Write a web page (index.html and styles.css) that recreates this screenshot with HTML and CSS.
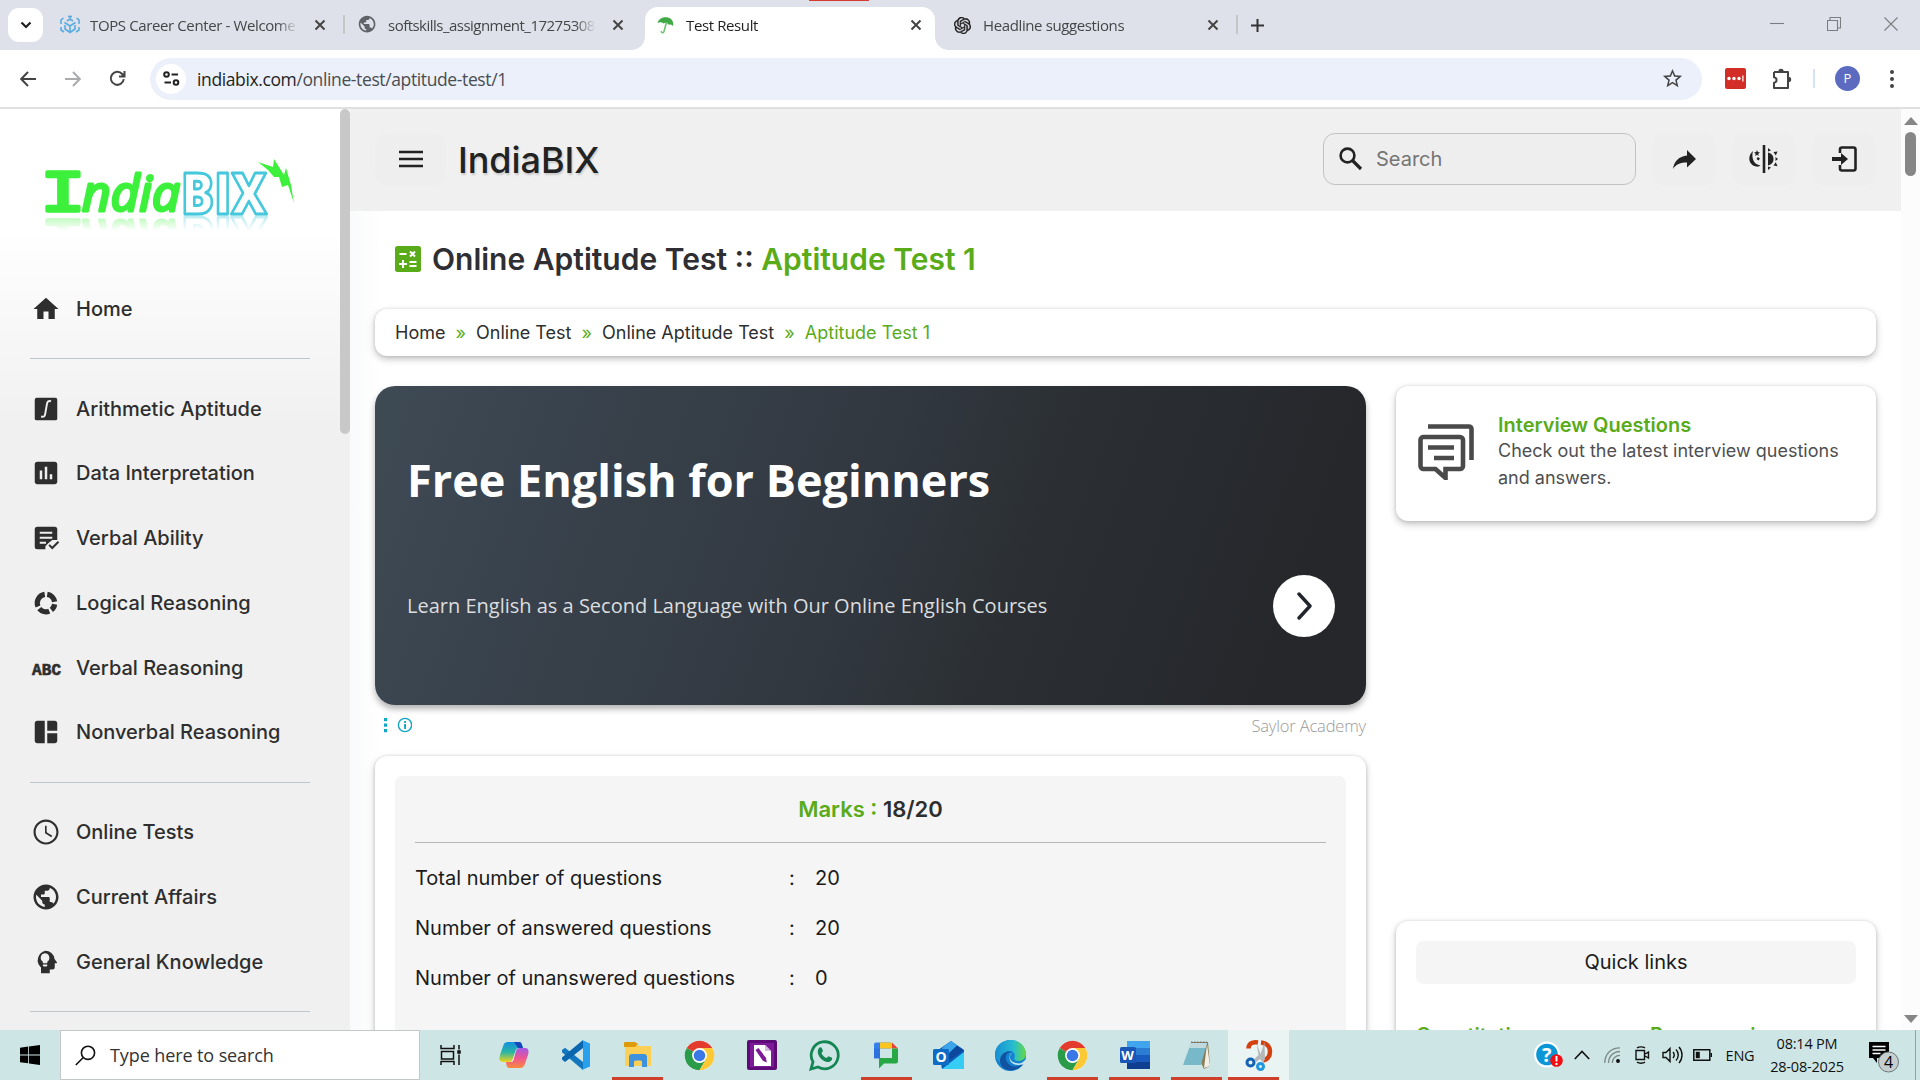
FILE: index.html
```html
<!DOCTYPE html>
<html lang="en">
<head>
<meta charset="utf-8">
<title>Test Result</title>
<link rel="stylesheet" href="styles.css">
</head>
<body>
<svg class="defs" width="0" height="0">
  <symbol id="close" viewBox="0 0 12 12"><path d="M1.5 1.5l9 9M10.5 1.5l-9 9" stroke="currentColor" stroke-width="2" fill="none"/></symbol>
  <symbol id="globe" viewBox="0 0 24 24"><path d="M12 2C6.48 2 2 6.48 2 12s4.480 10 10 10 10-4.480 10-10S17.520 2 12 2zm-1 17.930c-3.950-.49-7-3.850-7-7.930 0-.62.08-1.210.21-1.790L9 15v1c0 1.100.9 2 2 2v1.930zm6.900-2.540c-.26-.81-1-1.390-1.900-1.390h-1v-3c0-.55-.45-1-1-1H8v-2h2c.55 0 1-.45 1-1V7h2c1.100 0 2-.9 2-2v-.41c2.930 1.190 5 4.060 5 7.410 0 2.080-.8 3.970-2.100 5.390z"/></symbol>
  <symbol id="chrome" viewBox="0 0 48 48">
    <circle cx="24" cy="24" r="23" fill="#fff"/>
    <path d="M24 24L4.100 12.500A23 23 0 0 1 43.900 12.500H24z" fill="#e33b2e"/>
    <path d="M24 24L4.100 12.500A23 23 0 0 0 24 47L34 29.800z" fill="#2a9b48"/>
    <path d="M24 12.500H43.900A23 23 0 0 1 24 47L34 29.800z" fill="#fcc934"/>
    <circle cx="24" cy="24" r="11.500" fill="#fff"/><circle cx="24" cy="24" r="9" fill="#3b78e7"/>
  </symbol>
</svg>

<div class="tabstrip">
  <button class="tab-search"><svg width="12" height="8" viewBox="0 0 12 8"><path d="M1.500 1.500L6 6l4.500-4.500" fill="none" stroke="#1f1f1f" stroke-width="2.200"/></svg></button>
  <div class="tab">
    <svg class="favicon" viewBox="0 0 20 20" fill="none" stroke="#5aabe0" stroke-width="1.600"><path d="M10 18v-7L4.500 7.500M10 11l5.500-3.500M7 6l3-2 3 2M10 4V0.500M3.500 3L1 5v4M16.500 3L19 5v4M5 10v4l5 3.500 5-3.500v-4M1 12v3l3 2M19 12v3l-3 2M8 1.500h4"/></svg>
    <span class="tab-title">TOPS Career Center - Welcome</span>
    <svg class="tab-close"><use href="#close"/></svg>
  </div>
  <div class="tab divided">
    <svg class="favicon" viewBox="1 1 22 22" fill="#5f6368"><use href="#globe"/></svg>
    <span class="tab-title long">softskills_assignment_17275308</span>
    <svg class="tab-close"><use href="#close"/></svg>
  </div>
  <div class="tab active">
    <svg class="favicon" viewBox="0 0 20 20"><path d="M1.500 8C3 2 11 .5 15 4c2 1.800 2.500 4 2 7-1.200-1.500-2.800-2-4.300-1.200C11.500 8 9.500 7 7.500 8.500 5.500 6.700 3.500 7 1.500 8z" fill="#3fa945"/><path d="M10.500 7L8 16.500c-.7 2-3 1.500-2.600-.5" fill="none" stroke="#6fc172" stroke-width="1.600"/></svg>
    <span class="tab-title">Test Result</span>
    <svg class="tab-close"><use href="#close"/></svg>
  </div>
  <div class="tab">
    <svg class="favicon small" viewBox="0 0 24 24" fill="#1a1a1a" stroke="#1a1a1a" stroke-width=".5"><path d="M22.2819 9.8211a5.9847 5.9847 0 0 0-.5157-4.9108 6.0462 6.0462 0 0 0-6.5098-2.9A6.0651 6.0651 0 0 0 4.9807 4.1818a5.9847 5.9847 0 0 0-3.9977 2.9 6.0462 6.0462 0 0 0 .7427 7.0966 5.98 5.98 0 0 0 .511 4.9107 6.051 6.051 0 0 0 6.5146 2.9001A5.9847 5.9847 0 0 0 13.2599 24a6.0557 6.0557 0 0 0 5.7718-4.2058 5.9894 5.9894 0 0 0 3.9977-2.9001 6.0557 6.0557 0 0 0-.7475-7.0729zm-9.022 12.6081a4.4755 4.4755 0 0 1-2.8764-1.0408l.1419-.0804 4.7783-2.7582a.7948.7948 0 0 0 .3927-.6813v-6.7369l2.02 1.1686a.071.071 0 0 1 .038.052v5.5826a4.504 4.504 0 0 1-4.4945 4.4944zm-9.6607-4.1254a4.4708 4.4708 0 0 1-.5346-3.0137l.142.0852 4.783 2.7582a.7712.7712 0 0 0 .7806 0l5.8428-3.3685v2.3324a.0804.0804 0 0 1-.0332.0615L9.74 19.9502a4.4992 4.4992 0 0 1-6.1408-1.6464zM2.3408 7.8956a4.485 4.485 0 0 1 2.3655-1.9728V11.6a.7664.7664 0 0 0 .3879.6765l5.8144 3.3543-2.0201 1.1685a.0757.0757 0 0 1-.071 0l-4.8303-2.7865A4.504 4.504 0 0 1 2.3408 7.872zm16.5963 3.8558L13.1038 8.364 15.1192 7.2a.0757.0757 0 0 1 .071 0l4.8303 2.7913a4.4944 4.4944 0 0 1-.6765 8.1042v-5.6772a.79.79 0 0 0-.407-.667zm2.0107-3.0231l-.142-.0852-4.7735-2.7818a.7759.7759 0 0 0-.7854 0L9.409 9.2297V6.8974a.0662.0662 0 0 1 .0284-.0615l4.8303-2.7866a4.4992 4.4992 0 0 1 6.6802 4.66zM8.3065 12.863l-2.02-1.1638a.0804.0804 0 0 1-.038-.0567V6.0742a4.4992 4.4992 0 0 1 7.3757-3.4537l-.142.0805L8.704 5.459a.7948.7948 0 0 0-.3927.6813zm1.0976-2.3654l2.602-1.4998 2.6069 1.4998v2.9994l-2.5974 1.4997-2.6067-1.4997Z"/></svg>
    <span class="tab-title">Headline suggestions</span>
    <svg class="tab-close"><use href="#close"/></svg>
  </div>
  <div class="new-tab"><svg width="13" height="13" viewBox="0 0 13 13"><path d="M6.500 0v13M0 6.500h13" stroke="#333" stroke-width="2"/></svg></div>
  <div class="window-controls">
    <svg width="14" height="14" viewBox="0 0 14 14"><path d="M0 6.500h14"/></svg>
    <svg width="14" height="14" viewBox="0 0 14 14"><path d="M.5 3.500h10v10H.5zM3 3.500v-3h10.500v10.500H11"/></svg>
    <svg width="14" height="14" viewBox="0 0 14 14"><path d="M.5.5l13 13M13.500.5l-13 13"/></svg>
  </div>
  <i class="recording"></i>
</div>

<div class="toolbar">
  <div class="nav-slot"><svg width="16" height="16" viewBox="0 0 16 16" class="ln dark"><path d="M16 8H1.500M8 1L1.200 8 8 15"/></svg></div>
  <div class="nav-slot"><svg width="16" height="16" viewBox="0 0 16 16" class="ln pale"><path d="M0 8h14.500M8 1l6.800 7L8 15"/></svg></div>
  <div class="nav-slot"><svg width="17" height="17" viewBox="0 0 17 17" class="ln dark"><path d="M14.800 9.200A6.500 6.500 0 1 1 13.200 4L15 6M15.500 1v5.500H10"/></svg></div>
  <div class="omnibox">
    <span class="site-chip"><svg width="17" height="15" viewBox="0 0 17 15" fill="none" stroke="#222" stroke-width="2"><circle cx="3.500" cy="3.500" r="2.300"/><path d="M8.500 3.500H15M1.500 11.500H8"/><circle cx="13" cy="11.500" r="2.300"/></svg></span>
    <span class="url"><b>indiabix.com</b>/online-test/aptitude-test/1</span>
    <svg class="star" viewBox="0 0 24 24"><path fill="#444" d="M22 9.240l-7.190-.62L12 2 9.190 8.630 2 9.240l5.460 4.730L5.820 21 12 17.270 18.180 21l-1.630-7.030L22 9.240zM12 15.400l-3.760 2.270 1-4.280-3.320-2.880 4.380-.38L12 6.100l1.710 4.040 4.380.38-3.320 2.880 1 4.280L12 15.400z"/></svg>
  </div>
  <div class="ext"><svg width="21" height="21" viewBox="0 0 21 21"><rect width="21" height="21" rx="2" fill="#d32d27"/><g fill="#fff"><circle cx="4" cy="10.500" r="1.700"/><circle cx="9" cy="10.500" r="1.700"/><circle cx="14" cy="10.500" r="1.700"/><rect x="17.300" y="7.500" width="1.200" height="6"/></g></svg></div>
  <div class="ext puzzle"><svg width="22" height="22" viewBox="0 0 22 22"><path d="M3 4h14v5.500M17 13v7H3v-5.200c3.400-.6 3.400-5 0-5.600V4M17 9v5" fill="none" stroke="#444" stroke-width="2" stroke-linejoin="round"/><path d="M7.300 3.500a2.700 2.700 0 0 1 5.400 0zM17.500 8.800a2.700 2.700 0 0 1 0 5.400z" fill="#444"/></svg></div>
  <i class="tool-sep"></i>
  <span class="avatar">P</span>
  <svg class="dots" width="4" height="18" viewBox="0 0 4 18" fill="#444"><circle cx="2" cy="2" r="2"/><circle cx="2" cy="9" r="2"/><circle cx="2" cy="16" r="2"/></svg>
</div>

<div class="viewport">
  <aside class="sidebar">
    <div class="logo">
      <svg width="260" height="86" viewBox="0 -12 260 86">
        <text class="logo-serif" x="-4" y="52" textLength="46" lengthAdjust="spacingAndGlyphs">I</text>
        <text class="logo-script" x="38" y="52" textLength="98" lengthAdjust="spacingAndGlyphs">ndia</text>
        <text class="logo-bix" x="137" y="55" textLength="86" lengthAdjust="spacingAndGlyphs">BIX</text>
        <path d="M214 3l15 5 1-8 10 16 2-7 5 17 3 18-6-18-6 2-3-10-5 0-6-7z" fill="#3cf03c"/>
      </svg>
    </div>
    <nav>
      <a class="item"><svg viewBox="0 0 24 24"><path d="M10 20v-6h4v6h5v-8h3L12 3 2 12h3v8z"/></svg>Home</a>
      <hr>
      <a class="item"><svg viewBox="0 0 24 24"><rect x="3" y="3" width="18" height="18" rx="1.500"/><path d="M16 5.800c-2-.7-2.900.3-3.200 2l-1.500 8.400c-.3 1.700-1.200 2.400-3.200 1.800" fill="none" stroke="#f0f0f0" stroke-width="1.500"/></svg>Arithmetic Aptitude</a>
      <a class="item"><svg viewBox="0 0 24 24"><path d="M19 3H5c-1.100 0-2 .9-2 2v14c0 1.100.9 2 2 2h14c1.100 0 2-.9 2-2V5c0-1.100-.9-2-2-2zM9 17H7v-7h2v7zm4 0h-2V7h2v10zm4 0h-2v-4h2v4z"/></svg>Data Interpretation</a>
      <a class="item"><svg viewBox="0 0 24 24"><path d="M5 3h14a2 2 0 0 1 2 2v8.500h-4L14 16l-2.500 2.500V21H5a2 2 0 0 1-2-2V5a2 2 0 0 1 2-2z"/><path d="M7 7.700h10M7 11.700h10M7 15.700h5" stroke="#f0f0f0" stroke-width="1.600"/><path d="M14.500 17.500l2.500 2.500 5-5" fill="none" stroke="#2e2e2e" stroke-width="1.600"/></svg>Verbal Ability</a>
      <a class="item"><svg viewBox="0 0 24 24"><g fill="none" stroke="#2e2e2e" stroke-width="4.200"><path d="M13 5.100A7 7 0 0 1 18.900 11"/><path d="M18.900 13a7 7 0 0 1-2.600 4.500"/><path d="M14.600 18.500a7 7 0 0 1-8-2"/><path d="M5.600 14.800A7 7 0 0 1 11 5.100"/></g></svg>Logical Reasoning</a>
      <a class="item"><svg class="abc" viewBox="0 0 30 14"><text x="1" y="13.500" textLength="29">ABC</text></svg>Verbal Reasoning</a>
      <a class="item"><svg viewBox="0 0 24 24"><path d="M11 21H5c-1.100 0-2-.9-2-2V5c0-1.100.9-2 2-2h6v18zm2 0h6c1.100 0 2-.9 2-2v-6h-8v8zm8-10V5c0-1.100-.9-2-2-2h-6v8h8z"/></svg>Nonverbal Reasoning</a>
      <hr>
      <a class="item"><svg viewBox="0 0 24 24"><path d="M11.990 2C6.470 2 2 6.480 2 12s4.470 10 9.990 10C17.520 22 22 17.520 22 12S17.520 2 11.990 2zM12 20.300c-4.600 0-8.300-3.700-8.300-8.300S7.400 3.700 12 3.700s8.300 3.700 8.300 8.300-3.700 8.300-8.300 8.300zM12.500 7H11.200v6l5.050 3.150.75-1.230-4.500-2.670z"/></svg>Online Tests</a>
      <a class="item"><svg viewBox="0 0 24 24"><use href="#globe"/></svg>Current Affairs</a>
      <a class="item"><svg viewBox="0 0 24 24"><path d="M11.500 3a7.500 7.500 0 0 1 7.300 6.500l1.900 2.700c.3.500 0 .8-.5.800H19v3a2 2 0 0 1-2 2h-2v3H8v-4.600A7.800 7.800 0 0 1 11.500 3z"/><path d="M11 5a3.700 3.700 0 0 1 2 6.800V13H9.500v-1.200A3.700 3.700 0 0 1 11 5zM9.500 14H13v.9a.8.800 0 0 1-.8.600h-1.900a.8.800 0 0 1-.8-.6z" fill="#f0f0f0"/></svg>General Knowledge</a>
      <hr>
    </nav>
    <i class="side-thumb"></i>
  </aside>

  <main>
    <header class="topbar">
      <button class="menu-btn"><svg width="24" height="18" viewBox="0 0 24 18"><path d="M0 2h24M0 9h24M0 16h24" stroke="#222" stroke-width="2.400"/></svg></button>
      <span class="brand">IndiaBIX</span>
      <div class="search"><svg width="24" height="24" viewBox="0 0 24 24" fill="none" stroke="#222"><circle cx="8.500" cy="8.500" r="6.900" stroke-width="2.600"/><path d="M13.500 13.500l8.500 8.500" stroke-width="3.200"/></svg><span>Search</span></div>
      <button class="icon-btn"><svg width="23" height="19" viewBox="0 0 23 19"><path d="M14 0l9 9-9 8.500v-5C7.500 12.500 3 14 0 19 1 11 6 6.500 14 5.500z" fill="#222"/></svg></button>
      <button class="icon-btn"><svg width="30" height="28" viewBox="0 0 30 28"><path d="M15 0v28" stroke="#222" stroke-width="2.600"/><path d="M4 6C-2 11-.5 20 7 21.500c2 .4 3.500 0 4.500-1.200C5 20 2 13 4 6zM19 7.500c4 1 5.500 3.500 5.500 6.500S23 19.500 19 20.500zM8 5l.8 2 2.200.5-1.700 1.300.3 2.200L8 9.800 6.200 11l.4-2.200L5 7.500 7.200 7zM8.800 12l2.200 1.500-1.500 2-2-1.500zM19 3l3 2.500-3 1zM24.500 7l4-.5-1.700 4zM26.500 12l2.500 2-2.500 2zM24.500 20.500l4 .8-1.700-4zM19 25l3-2.500-3-1z" fill="#222"/></svg></button>
      <button class="icon-btn"><svg width="25" height="26" viewBox="0 0 25 26"><path d="M8 7V3.500A2 2 0 0 1 10 1.500h11.500a2 2 0 0 1 2 2v19a2 2 0 0 1-2 2H10a2 2 0 0 1-2-2V19" fill="none" stroke="#222" stroke-width="2.600"/><path d="M0 11h9V7l7 6-7 6v-4H0z" fill="#222"/></svg></button>
    </header>

    <div class="content">
      <h1><svg width="26" height="26" viewBox="0 0 26 26"><rect width="26" height="26" rx="2.500" fill="#5aab19"/><path d="M4.500 8h7M15 5.500l5 5M20 5.500l-5 5M8 14v8M4 18h8M14.500 16h7M14.500 20h7" stroke="#fff" stroke-width="2"/></svg><span>Online Aptitude Test :: <em>Aptitude Test 1</em></span></h1>
      <div class="crumbs card"><span>Home</span><i>»</i><span>Online Test</span><i>»</i><span>Online Aptitude Test</span><i>»</i><em>Aptitude Test 1</em></div>

      <div class="columns">
        <section class="left">
          <div class="ad">
            <h2>Free English for Beginners</h2>
            <div class="ad-row"><p>Learn English as a Second Language with Our Online English Courses</p>
              <span class="ad-go"><svg width="17" height="28" viewBox="0 0 17 28"><path d="M3 2l11 12L3 26" fill="none" stroke="#20262c" stroke-width="3.400" stroke-linecap="round" stroke-linejoin="round"/></svg></span></div>
          </div>
          <div class="ad-meta">
            <svg width="28" height="16" viewBox="0 0 28 16" fill="#10a6c4"><rect x="0" y="1" width="3.200" height="3.200"/><rect x="0" y="6.500" width="3.200" height="3.200"/><rect x="0" y="12" width="3.200" height="3.200"/><circle cx="21" cy="8" r="6.600" fill="none" stroke="#10a6c4" stroke-width="1.400"/><rect x="20.100" y="4" width="1.900" height="1.900"/><rect x="20.100" y="7" width="1.900" height="5"/></svg>
            <span>Saylor Academy</span>
          </div>
          <div class="card result">
            <div class="marks-box">
              <h3><em>Marks :</em> 18/20</h3>
              <dl>
                <dt>Total number of questions</dt><dd>:</dd><dd>20</dd>
                <dt>Number of answered questions</dt><dd>:</dd><dd>20</dd>
                <dt>Number of unanswered questions</dt><dd>:</dd><dd>0</dd>
              </dl>
            </div>
          </div>
        </section>
        <section class="right">
          <div class="card interview">
            <svg width="56" height="56" viewBox="0 0 56 56" fill="none" stroke="#4a4a4a" stroke-width="4.600"><path d="M10 2.500h41a2.500 2.500 0 0 1 2.500 2.500v31"/><path d="M6 13h36a3 3 0 0 1 3 3v26a3 3 0 0 1-3 3H27.500v9L17.500 45H5.500a3 3 0 0 1-3-3V16a3 3 0 0 1 3.500-3zM10 23.500h26M16 34h20"/></svg>
            <div><h4>Interview Questions</h4><p>Check out the latest interview questions and answers.</p></div>
          </div>
          <div class="card quick">
            <h5>Quick links</h5>
            <div class="quick-cols"><span>Quantitative</span><span>Programming</span></div>
          </div>
        </section>
      </div>
    </div>
  </main>

  <div class="scrollbar"><i class="up"></i><i class="thumb"></i><i class="down"></i></div>
</div>

<footer class="taskbar">
  <div class="start"><svg width="20" height="20" viewBox="0 0 20 20"><path d="M0 2.800L8.200 1.600V9.500H0zM9 1.500L20 0v9.500H9zM0 10.400h8.200v7.900L0 17.200zM9 10.400h11V20L9 18.400z"/></svg></div>
  <div class="task-search"><svg width="21" height="21" viewBox="0 0 21 21" fill="none" stroke="#111" stroke-width="1.600"><circle cx="13" cy="7.800" r="6.600"/><path d="M8.300 12.500L.8 20"/></svg><span>Type here to search</span></div>
  <div class="apps">
    <div class="app taskview"><svg width="22" height="20" viewBox="0 0 22 20" fill="none" stroke="#111" stroke-width="1.500"><path d="M1 0v3.500h13V0M1 20v-3.500h13V20M1.500 6.500h12v7.500h-12zM19 0v4.500M19 9.500V20"/><rect x="18" y="6" width="2" height="2" fill="#111"/></svg></div>
    <div class="app"><svg width="30" height="30" viewBox="0 0 30 30"><defs><linearGradient id="cp1" x2="0" y2="1"><stop stop-color="#1490df"/><stop offset=".5" stop-color="#27b5a5"/><stop offset="1" stop-color="#f2d31b"/></linearGradient><linearGradient id="cp2" x2="0" y2="1"><stop stop-color="#a45ae8"/><stop offset=".5" stop-color="#ee5593"/><stop offset="1" stop-color="#f98a3c"/></linearGradient></defs><path d="M9 2h11c2 0 2.500 1.500 3 3l1 3h-4c-2 0-3 1-3.600 3L14 19c-.8 2-2 3-4 3H4c-4 0-4-3-3-7L4.500 5C5.300 3 6.500 2 9 2z" fill="url(#cp1)"/><path d="M15 2h5c2 0 2.500 1.500 3 3l1 3h-5z" fill="#1747b8"/><path d="M21 28H11c-3 0-3.500-2-4-6h4c2 0 3-1 3.600-3L17 11c.8-2 2-3 4-3h5c4 0 4 3 3 7l-3.500 10c-.8 2-2 3-4.500 3z" fill="url(#cp2)"/><path d="M16.600 11L14 19c-.6 1.600-1.400 2.500-2.600 2.900l2-.5c.6-.5 1-1.300 1.300-2.400z" fill="#fff"/></svg></div>
    <div class="app"><svg width="30" height="30" viewBox="0 0 30 30"><path d="M21.500 8.500v13L13 15z" fill="#cde6e5"/><path d="M1 10l3-2.300L22 22v8L1 12.300z" fill="#1277bd"/><path d="M1 19.500l3 2.500L22 8V0L1 17.500z" fill="#0a66ae"/><path d="M21 0l8 3.500v23L21 30c1-1 1-2 1-3V3c0-1 0-2-1-3z" fill="#28a0ec"/></svg></div>
    <div class="app open"><svg width="28" height="26" viewBox="0 0 28 26"><path d="M1 1h11l3 3h12v20H1z" fill="#fccf57"/><path d="M0 1a1 1 0 0 1 1-1h10l3 2-3 3H0z" fill="#dd9b0c"/><path d="M5 25V15a3 3 0 0 1 3-3h12a3 3 0 0 1 3 3v10h-5v-5a1.500 1.500 0 0 0-1.500-1.500h-5A1.500 1.500 0 0 0 10 20v5z" fill="#3d91dd"/></svg></div>
    <div class="app"><svg width="31" height="31"><use href="#chrome"/></svg></div>
    <div class="app"><svg width="30" height="30" viewBox="0 0 30 30"><rect width="30" height="30" rx="2" fill="#5d0c77"/><rect x="3" y="3" width="24" height="24" fill="#7c1a98"/><path d="M7 5h11l6 6v15H7z" fill="#fff"/><path d="M18 5v6h6" fill="#d6b9df"/><path d="M8.500 10l3-2 7.500 10 .8 4.500-4-1.800z" fill="#7c1a98"/></svg></div>
    <div class="app"><svg width="31" height="31" viewBox="0 0 31 31"><path d="M2 29l2-7A13.500 13.500 0 1 1 9 27z" fill="none" stroke="#158653" stroke-width="2.800"/><path d="M10 8c1-1 2.500-.8 3 .5l1 2.500-1.500 2c1 2.500 2.500 4 5 5l2-1.800 3 1.300c1 .6.8 2-.2 3-3 3-7.500 1-10.300-1.800S7.500 11 10 8z" fill="#158653"/></svg></div>
    <div class="app open"><svg width="24" height="28" viewBox="0 0 24 28"><path d="M0 3.500a2 2 0 0 1 2-2h15v6H6v10H0z" fill="#3480ed"/><path d="M6 1.500h12v6H6z" fill="#ffc41e"/><path d="M18 1.500l6 6h-6z" fill="#e84335"/><path d="M18 7.500h6v13a2 2 0 0 1-2 2H10l-5 5V17h13z" fill="#28a745"/><path d="M0 7.500h6V17H0z" fill="#2c72df"/></svg></div>
    <div class="app"><svg width="31" height="28" viewBox="0 0 31 28"><path d="M5 9L18 0l13 9v17a2 2 0 0 1-2 2H9z" fill="#0c5eb7"/><path d="M9 7l9-7 10 7-14 10z" fill="#3aa5ea"/><path d="M24 4.500l7 4.800L14 21v-7z" fill="#0b479c"/><path d="M9 28l22-17v15a2 2 0 0 1-2 2z" fill="#36cdf5"/><rect y="8" width="16" height="16" rx="1.500" fill="#0e6cc5"/><text x="2.500" y="21" class="glyph">O</text></svg></div>
    <div class="app"><svg width="31" height="31" viewBox="0 0 31 31"><defs><linearGradient id="eg"><stop stop-color="#168ed2"/><stop offset=".6" stop-color="#28bdd1"/><stop offset="1" stop-color="#65d941"/></linearGradient></defs><circle cx="15.500" cy="15.500" r="15.500" fill="#1382d2"/><path d="M0 14C1-4 30-5 31 14c0 7-9 9-12 5 2-4 0-8-4-8-6 0-10 6-8 13C3 21 0 18 0 14z" fill="url(#eg)"/><path d="M17 12c-5-1-8 5-5 10s10 6 16 2c-4 6-12 8-18 5s-7-12-1-16c3-2 6-2 8-1z" fill="#1153a0"/><path d="M17 13c-3 2-3 7 1 9s9 2 11-1c1-1 4-3 2 1l-1 2c-3 1-11 2-14-2s-1-9 1-9z" fill="#cde6e5"/></svg></div>
    <div class="app open"><svg width="31" height="31"><use href="#chrome"/></svg></div>
    <div class="app open"><svg width="30" height="28" viewBox="0 0 30 28"><rect x="7" width="23" height="7" fill="#41a5ee"/><rect x="7" y="7" width="23" height="7" fill="#2b7cd3"/><rect x="7" y="14" width="23" height="7" fill="#185abd"/><rect x="7" y="21" width="23" height="7" fill="#103f91"/><rect y="6" width="16" height="16" rx="1.500" fill="#1956b5"/><text x="1.300" y="19" class="glyph w">W</text></svg></div>
    <div class="app open"><svg width="28" height="28" viewBox="0 0 28 28"><path d="M8 1h17l2 24-6 3z" fill="#8d7a50"/><path d="M24 3l3 22-6 2z" fill="#f1efe8"/><path d="M8 2h16l-6 22H0z" fill="#78b9c9"/><path d="M8 2h16l-1.500 5H5.700z" fill="#bfd9de"/><path d="M8 1.200h16" stroke="#777" stroke-width="1.600" stroke-dasharray="1.500 1.500"/></svg></div>
    <div class="app open current"><svg width="28" height="31" viewBox="0 0 28 31"><path d="M13 2.500C7 1.500 3.500 4 3.500 8.500M16 2.500c6 .5 9 4.500 9 9 0 5-3 8-7 9" fill="none" stroke="#d5400f" stroke-width="4.500"/><path d="M11.500 3l4 11L19.500 2l.5 17-2 4-3-4-4 3-1.500-3 4-4z" fill="#b4b8bb"/><circle cx="5.500" cy="22.500" r="3.500" fill="none" stroke="#1463b4" stroke-width="3"/><circle cx="15.500" cy="26.500" r="3" fill="none" stroke="#2097df" stroke-width="3"/></svg></div>
  </div>
  <div class="tray">
    <div class="tr help"><svg width="29" height="28" viewBox="0 0 29 28"><circle cx="13" cy="13.500" r="13" fill="#fff"/><circle cx="13" cy="13.500" r="10.800" fill="#0d96d5"/><text x="8" y="20.500" class="glyph q">?</text><circle cx="22.500" cy="19.500" r="6.300" fill="#f10d12"/><path d="M22.500 15v5.500M22.500 22v2" stroke="#fff" stroke-width="2"/></svg></div>
    <div class="tr"><svg width="16" height="10" viewBox="0 0 16 10" fill="none" stroke="#111" stroke-width="1.600"><path d="M.8 9L8 1.500 15.200 9"/></svg></div>
    <div class="tr"><svg width="16" height="16" viewBox="0 0 16 16" fill="none" stroke="#7d8989" stroke-width="1.300"><path d="M.8 16C.8 7 7 .8 16 .8M4.500 16C4.500 9.500 9.500 4.500 16 4.500M8.300 16c0-4.500 3.200-7.700 7.700-7.700"/><circle cx="14" cy="14" r="1.300" fill="#111" stroke="#111"/></svg></div>
    <div class="tr"><svg width="15" height="18" viewBox="0 0 15 18" fill="none" stroke="#111" stroke-width="1.400"><path d="M1 4.500h8.500v9H1zM10 8l3.500-2v6L10 10M2 1.800c2-1.300 6-1.300 8 0M2 16.200c2 1.300 6 1.300 8 0"/></svg></div>
    <div class="tr"><svg width="21" height="18" viewBox="0 0 21 18" fill="none" stroke="#111" stroke-width="1.400"><path d="M1 6.500h3l4-4v13l-4-4H1zM11 6c1.500 1.800 1.500 4.200 0 6M14 3.500c3 3.200 3 7.800 0 11M17 1c4 4.500 4 11.500 0 16"/></svg></div>
    <div class="tr"><svg width="19" height="12" viewBox="0 0 19 12" fill="none" stroke="#111" stroke-width="1.500"><path d="M.8.8h16v10.400H.8zM18.500 4v4"/><rect x="2.800" y="2.800" width="4" height="6.400" fill="#111" stroke="none"/></svg></div>
    <div class="tr lang">ENG</div>
    <div class="clock"><span>08:14 PM</span><span>28-08-2025</span></div>
    <div class="notif"><svg width="31" height="32" viewBox="0 0 31 32"><path d="M0 1h20v16H8v5l-4-5H0z"/><path d="M3.500 5.500h13M3.500 9h13M3.500 12.500h8" stroke="#fff" stroke-width="1.300"/><circle cx="19.500" cy="21" r="10" fill="#c6cfcf" stroke="#6d7777"/><text x="15" y="26.500" class="count">4</text></svg></div>
    <i class="desktop"></i>
  </div>
</footer>
</body>
</html>
```
FILE: styles.css
```css
* { box-sizing: border-box; }
body { margin: 0; width: 1920px; height: 1080px; overflow: hidden; display: flex; flex-direction: column; background: #fff; font-family: Inter, "Liberation Sans", sans-serif; color: #2e2e2e; }
button { border: 0; padding: 0; display: flex; align-items: center; justify-content: center; }
em, i { font-style: normal; }
h1, h2, h3, h4, h5, p, dl, dd { margin: 0; font-weight: 400; }
svg { display: block; flex: none; }
.defs { position: absolute; }

.tabstrip { position: relative; flex: none; height: 50px; background: #dee1e9; display: flex; font-family: "Open Sans", "Noto Sans", sans-serif; }
.tab-search { width: 35px; height: 34px; margin: 8px 3px 0 8px; border-radius: 11px; background: #fff; }
.tab { position: relative; width: 298px; height: 50px; padding: 0 16px 0 14px; display: flex; align-items: center; gap: 10px; color: #444746; }
.tab > * { z-index: 1; }
.tab.divided::before { content: ""; position: absolute; left: -1px; top: 15px; width: 2px; height: 19px; background: #c4c7c5; }
.favicon { width: 20px; height: 20px; }
.favicon.small { width: 17px; height: 17px; margin-right: 2px; }
.tab-title { width: 208px; height: 24px; line-height: 24px; overflow: hidden; white-space: nowrap; font-size: 15px; letter-spacing: -.38px; -webkit-mask-image: linear-gradient(to right, #000 90%, transparent); }
.tab-title.long { letter-spacing: -.52px; }
.tab-close { width: 12px; height: 12px; color: #444; margin-left: 6px; }
.tab.active { color: #1f1f1f; }
.tab.active::before { content: ""; position: absolute; z-index: 0; left: 3px; right: 5px; top: 7px; bottom: 0; background: #fff; border-radius: 13px 13px 0 0; }
.tab.active::after { content: ""; position: absolute; z-index: 0; left: -10px; right: -8px; bottom: 0; height: 13px; background: radial-gradient(circle at 0 0, transparent 12.500px, #fff 13px) left / 13px 13px no-repeat, radial-gradient(circle at 100% 0, transparent 12.500px, #fff 13px) right / 13px 13px no-repeat; }
.new-tab { width: 44px; height: 50px; padding-left: 15px; display: flex; align-items: center; background: linear-gradient(#c4c7c5, #c4c7c5) 0 15px / 2px 19px no-repeat; margin-left: -2px; }
.window-controls { margin: 17px 22px 0 auto; display: flex; gap: 43px; }
.window-controls svg { fill: none; stroke: #7b7d82; stroke-width: 1.100; }
.recording { position: absolute; left: 809px; top: 0; width: 60px; height: 1px; background: #d43c2c; }

.toolbar { flex: none; height: 59px; border-bottom: 2px solid #e0e0e0; background: #fff; display: flex; align-items: center; padding-left: 5px; font-family: "Open Sans", "Noto Sans", sans-serif; }
.nav-slot { width: 45px; display: flex; justify-content: center; }
.ln { fill: none; stroke-width: 2; }
.dark { stroke: #444; }
.pale { stroke: #a9abad; }
.omnibox { width: 1552px; height: 42px; margin-left: 10px; border-radius: 21px; background: #ebf0fa; display: flex; align-items: center; padding: 0 18px 0 6px; }
.site-chip { width: 30px; height: 30px; border-radius: 50%; background: #fff; display: flex; align-items: center; justify-content: center; }
.url { margin: 1px 0 0 11px; font-size: 17.500px; letter-spacing: -.38px; color: #4a4d51; }
.url b { font-weight: 400; color: #1f1f1f; }
.star { width: 23px; height: 23px; margin-left: auto; }
.ext { margin-left: 23px; }
.puzzle { margin-left: 25px; }
.tool-sep { width: 2px; height: 19px; margin-left: 20px; background: #d3e3fd; }
.avatar { width: 25px; height: 25px; margin-left: 20px; border-radius: 50%; background: #5c6bc0; color: #fff; font-size: 13px; line-height: 25px; text-align: center; }
.dots { margin-left: 30px; }

.viewport { flex: none; height: 921px; display: flex; overflow: hidden; }
.sidebar { position: relative; width: 350px; flex: none; background: linear-gradient(#fff 0, #fff 120px, #f0f0f0 320px); }
.logo { height: 167.600px; padding: 38px 0 0 44px; }
.logo svg { -webkit-box-reflect: below -35px linear-gradient(transparent 62%, rgba(0,0,0,.35) 78%); overflow: visible; }
.logo-serif { font: 60px "Liberation Mono", monospace; fill: #3cf03c; stroke: #3cf03c; stroke-width: 3.500; stroke-linejoin: round; }
.logo-script { font: italic 400 50px "Open Sans", sans-serif; fill: #3cf03c; stroke: #3cf03c; stroke-width: 3; stroke-linejoin: round; }
.logo-bix { font: 800 57px "Open Sans", sans-serif; fill: #fff; stroke: #46c8dc; stroke-width: 3; stroke-linejoin: round; }
.item { height: 64.750px; padding-left: 31px; display: flex; align-items: center; gap: 15px; font-size: 20px; font-weight: 500; line-height: 1; }
.item svg { width: 30px; height: 30px; fill: #2e2e2e; }
.item svg.abc { height: 14px; overflow: visible; }
.abc text { font: bold 16px "Liberation Mono", monospace; fill: #2e2e2e; stroke: #2e2e2e; stroke-width: .6; }
.sidebar hr { width: 280px; height: 1px; margin: 17px 0 17px 30px; border: 0; background: #bfc7cc; }
.side-thumb { position: absolute; right: 0; top: 0; width: 10px; height: 325px; border-radius: 5px; background: #c8c8c8; }

main { width: 1551px; background: linear-gradient(to right, #f9fafb, #fff 30px); }
.topbar { height: 102px; padding: 0 25px 2px; background: #f0f0f0; display: flex; align-items: center; }
.menu-btn { width: 71px; height: 52px; border-radius: 12px; background: #eee; }
.brand { margin: 2px 0 0 12px; font-size: 36px; font-weight: 500; letter-spacing: -.05px; color: #222; text-shadow: 1px 2px 2px rgba(0,0,0,.16); }
.search { width: 313px; height: 52px; margin-left: auto; border: 1px solid #c2c2c2; border-radius: 12px; background: #eee; display: flex; align-items: center; gap: 13px; padding-left: 15px; font-size: 20px; color: #757575; }
.icon-btn { width: 64px; height: 52px; margin-left: 16px; border-radius: 12px; background: #eee; }

.content { padding: 0 25px; }
h1 { height: 98px; padding: 0 0 2px 20px; display: flex; align-items: center; gap: 11px; font-size: 30px; font-weight: 600; color: #2e2e33; }
h1 em, h3 em, .crumbs em, .crumbs i { color: #5aab19; }
.card { background: #fff; border-radius: 12px; box-shadow: 0 3px 7px rgba(0,0,0,.25), 0 0 3px rgba(0,0,0,.12); }
.crumbs { height: 47px; padding-left: 20px; display: flex; align-items: center; font-size: 18px; }
.crumbs i { width: 30.600px; text-align: center; }
.columns { margin-top: 30px; display: flex; gap: 30px; }
.left { width: 991px; }
.right { width: 480px; }
.ad { height: 319px; border-radius: 20px; padding: 61px 31px 0 32px; font-family: "Open Sans", sans-serif; color: #fff; background: linear-gradient(110deg, #3e4a54, #3a444e 15%, #31373f 50%, #2b2f33 65%, #25272b 90%); box-shadow: 0 4px 6px rgba(0,0,0,.3); }
.ad h2 { height: 66px; line-height: 66px; font-size: 45px; font-weight: 700; }
.ad-row { height: 62px; margin-top: 62px; display: flex; align-items: center; justify-content: space-between; font-size: 20px; color: #dcdddf; white-space: nowrap; }
.ad-row p { padding-bottom: 2px; }
.ad-go { width: 62px; height: 62px; border-radius: 50%; background: #fff; display: flex; align-items: center; justify-content: center; }
.ad-meta { height: 51px; padding: 0 0 11px 9px; display: flex; align-items: center; justify-content: space-between; font: 300 16.500px "Open Sans", sans-serif; letter-spacing: -.17px; color: #9a9a9a; }
.result { height: 320px; padding: 20px; }
.marks-box { height: 300px; padding: 0 20px; border-radius: 7px; background: #f5f5f5; }
h3 { height: 67px; line-height: 66px; text-align: center; border-bottom: 1px solid #b5b5b5; font-size: 22px; font-weight: 600; }
dl { margin-top: 10px; display: grid; grid-template-columns: 374px 26px 1fr; font-size: 20px; line-height: 50px; color: #1b1b1b; }
.interview { height: 135px; padding: 25px 22px 0; display: flex; gap: 24px; }
.interview svg { margin-top: 13px; }
h4 { padding-top: 2px; font-size: 20px; line-height: 25px; height: 26px; font-weight: 600; color: #5aab19; }
.interview p { font-size: 18px; line-height: 27px; color: #4f4f4f; }
.quick { height: 180px; margin-top: 400px; padding: 20px; }
h5 { height: 43px; line-height: 43px; border-radius: 7px; background: #f5f5f5; text-align: center; font-size: 20px; color: #1b1b1b; }
.quick-cols { margin-top: 36px; display: grid; grid-template-columns: 234px 1fr; font-size: 20px; line-height: 30px; font-weight: 600; color: #5aab19; }

.scrollbar { width: 19px; background: #fcfcfc; display: flex; flex-direction: column; align-items: center; padding: 8px 0 7px; }
.up, .down { border: 7px solid transparent; border-top: 0; border-bottom: 8px solid #868686; width: 0; }
.down { margin-top: auto; border-bottom: 0; border-top: 8px solid #868686; }
.thumb { width: 11px; height: 44px; margin-top: 7px; border-radius: 6px; background: #868686; }

.taskbar { flex: none; height: 50px; background: #cde6e5; display: flex; font-family: "Open Sans", "Noto Sans", sans-serif; color: #111; }
.start { width: 60px; display: flex; align-items: center; justify-content: center; }
.task-search { width: 360px; border: 1px solid #c2c8c8; background: #fff; display: flex; align-items: center; gap: 14px; padding-left: 14px; font-size: 18px; letter-spacing: -.1px; color: #333; }
.apps { margin-left: 1px; display: flex; gap: 1.100px; }
.app { width: 61px; height: 50px; display: flex; align-items: center; justify-content: center; }
.taskview { padding-right: 2px; }
.open { background: linear-gradient(#d03f2a, #d03f2a) 5px 100% / 51px 3px no-repeat; }
.current { background-color: #e9f4f3; background-position: 0 100%; }
.glyph { font: bold 14px "Open Sans", sans-serif; fill: #fff; }
.w { font-size: 13px; }
.q { font-size: 20px; }
.tray { margin-left: auto; display: flex; align-items: center; }
.tr { width: 30px; display: flex; justify-content: center; }
.help { width: 38px; }
.lang { width: 46px; font-size: 14.500px; letter-spacing: -.2px; }
.clock { width: 88px; display: flex; flex-direction: column; align-items: center; font-size: 14.500px; line-height: 23px; letter-spacing: -.2px; white-space: nowrap; }
.notif { width: 64px; padding-left: 18px; padding-top: 4px; }
.count { font: 16px "Open Sans", sans-serif; }
.desktop { width: 5px; height: 50px; border-left: 1px solid #8fa5a4; }
```
